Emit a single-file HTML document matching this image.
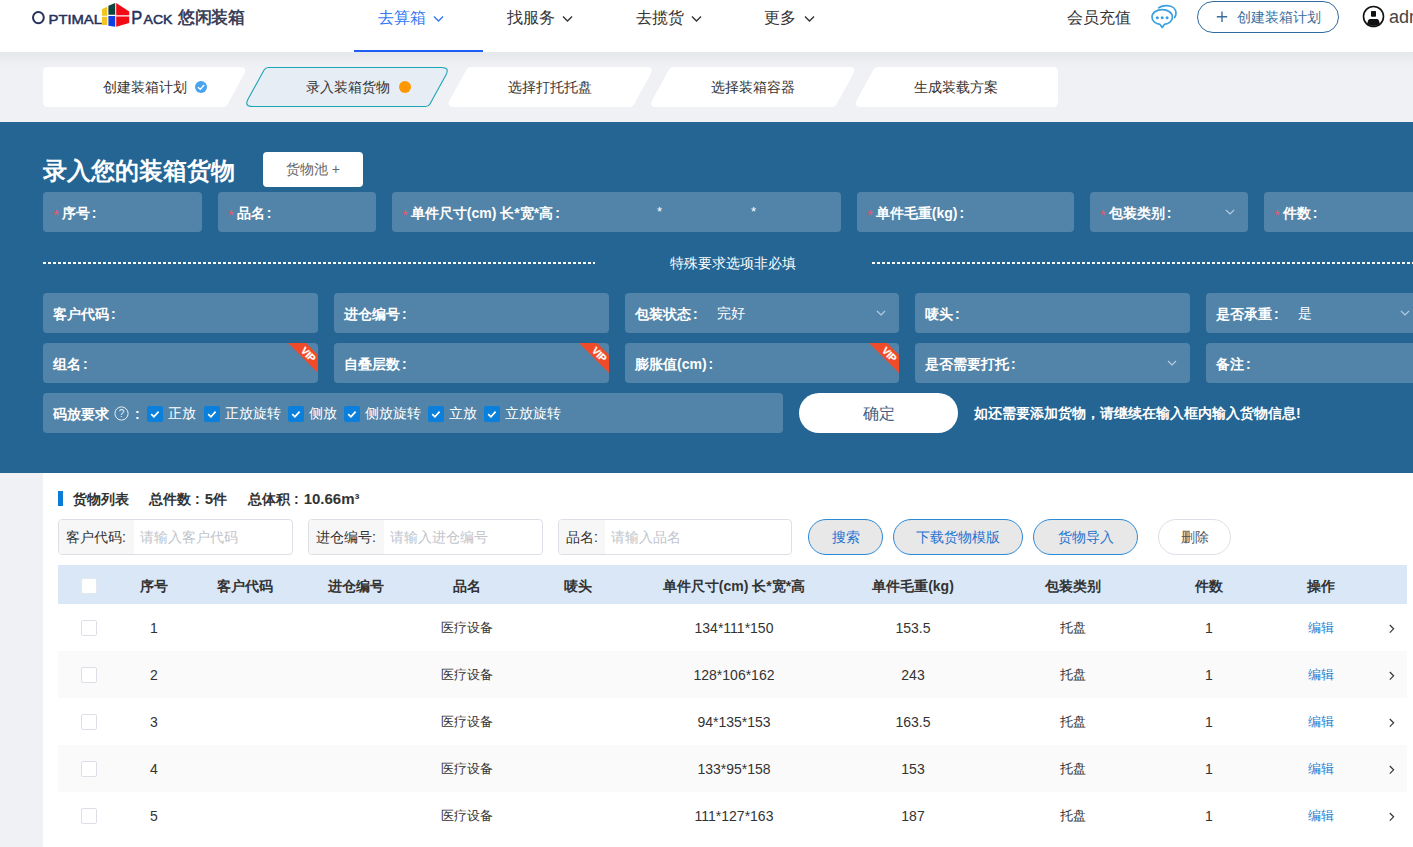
<!DOCTYPE html>
<html><head><meta charset="utf-8">
<style>
*{margin:0;padding:0;box-sizing:border-box}
html,body{width:1413px;height:847px;overflow:hidden;background:#fff;font-family:"Liberation Sans",sans-serif;color:#333}
.abs{position:absolute}
#hdr{position:absolute;left:0;top:0;width:1413px;height:52px;background:#fff}
.nav{position:absolute;top:8px;font-size:16px;line-height:20px;color:#333;white-space:nowrap}
.chev{position:absolute;top:14.5px}
#band{position:absolute;left:0;top:52px;width:1413px;height:70px;background:linear-gradient(#e6e7eb,#eceef2 10px,#eff1f5 16px,#eff1f5)}
.tabt{position:absolute;top:79px;font-size:14px;line-height:16px;color:#333;white-space:nowrap}
#panel{position:absolute;left:0;top:122px;width:1413px;height:351px;background:#256594}
.inp{position:absolute;height:40px;background:#5284a9;border-radius:4px;overflow:hidden}
.lbl{position:absolute;left:10px;top:13px;font-size:14px;line-height:16px;font-weight:bold;color:#fff;white-space:nowrap}
.req{color:#e8566a;font-weight:normal;margin-right:3px;position:relative;top:2px;font-size:15px}
.val{position:absolute;top:12px;font-size:14px;line-height:16px;color:#fff;white-space:nowrap}
.sel{position:absolute;top:17px}
.vip{position:absolute;right:0;top:0;width:30px;height:30px}
#content{position:absolute;left:43px;top:473px;width:1370px;height:374px;background:#fff}
#lm{position:absolute;left:0;top:473px;width:43px;height:374px;background:#eff1f5}
.fi{position:absolute;top:519px;height:36px;border:1px solid #dcdfe6;border-radius:4px;overflow:hidden;background:#fff}
.fil{position:absolute;left:0;top:0;height:34px;background:#f7f7f8;font-size:14px;line-height:35px;color:#333;padding-left:7px;white-space:nowrap}
.fip{position:absolute;top:0;font-size:14px;line-height:35px;color:#c0c4cc;white-space:nowrap}
.btn{position:absolute;top:519px;height:36px;border:1px solid #2b8ad8;border-radius:18px;background:#e8e8e8;font-size:14px;line-height:34px;text-align:center;color:#1f74d0;white-space:nowrap}
#thead{position:absolute;left:58px;top:565px;width:1349px;height:39px;background:#d9e7f6}
.th{position:absolute;top:578px;font-size:14px;line-height:16px;font-weight:bold;color:#333;white-space:nowrap;transform:translateX(-50%)}
.row{position:absolute;left:58px;width:1349px;height:47px}
.td{position:absolute;font-size:13px;line-height:16px;color:#333;white-space:nowrap;transform:translateX(-50%)}
.cb{position:absolute;left:81px;width:16px;height:16px;border:1px solid #dcdfe6;border-radius:2px;background:#fff}
</style></head><body>

<div id="hdr">
<svg class="abs" style="left:0;top:0" width="250" height="40" viewBox="0 0 250 40">
 <g fill="#26315c" stroke="#26315c" stroke-width="0.5" font-family="Liberation Sans">
  <ellipse cx="38.4" cy="17.6" rx="5.4" ry="5.7" fill="none" stroke-width="2"/>
  <text x="48.5" y="24" font-size="13.4" textLength="53.5" lengthAdjust="spacingAndGlyphs">PTIMAL</text>
  <text x="131.3" y="24" font-size="17.5" textLength="11" lengthAdjust="spacingAndGlyphs">P</text>
  <text x="143.5" y="24" font-size="13.4" textLength="29" lengthAdjust="spacingAndGlyphs">ACK</text>
 </g>
 <polygon points="102,9 107.2,6.8 107.2,15.8 102,15.8" fill="#f1c522"/>
 <polygon points="102,16.8 107.2,16.8 107.2,25 102,25" fill="#f1c522"/>
 <polygon points="108.4,5.7 115.2,3 115.2,14.8 108.4,14.8" fill="#0d4440"/>
 <polygon points="108.4,16 115.2,16 115.2,26.8 108.4,25.7" fill="#0e3fe0"/>
 <polygon points="116.2,3 129.2,11.5 129.2,15.2 116.2,15.2" fill="#f10b17"/>
 <polygon points="116.2,16.5 129.2,16.5 129.2,23 116.2,26.8" fill="#f10b17"/>
</svg>
<div class="abs" style="left:178px;top:6px;font-size:16.5px;line-height:22px;color:#3b4058;font-weight:bold;letter-spacing:-0.3px">悠闲装箱</div>
<div class="nav" style="left:378px;color:#3478f6">去算箱</div>
<svg class="chev" style="left:433px" width="11" height="8" viewBox="0 0 11 8"><path d="M1 1.5 L5.5 6 L10 1.5" fill="none" stroke="#3478f6" stroke-width="1.4"/></svg>
<div class="abs" style="left:354px;top:50px;width:129px;height:2px;background:#1e5ef5"></div>
<div class="nav" style="left:507px">找服务</div>
<svg class="chev" style="left:562px" width="11" height="8" viewBox="0 0 11 8"><path d="M1 1.5 L5.5 6 L10 1.5" fill="none" stroke="#333" stroke-width="1.4"/></svg>
<div class="nav" style="left:636px">去揽货</div>
<svg class="chev" style="left:691px" width="11" height="8" viewBox="0 0 11 8"><path d="M1 1.5 L5.5 6 L10 1.5" fill="none" stroke="#333" stroke-width="1.4"/></svg>
<div class="nav" style="left:764px">更多</div>
<svg class="chev" style="left:804px" width="11" height="8" viewBox="0 0 11 8"><path d="M1 1.5 L5.5 6 L10 1.5" fill="none" stroke="#333" stroke-width="1.4"/></svg>
<div class="nav" style="left:1067px">会员充值</div>
<svg class="abs" style="left:1150px;top:4px" width="28" height="26" viewBox="0 0 28 26">
 <path d="M8.8 3.8 C11 2.2 14 1.6 17 1.7 C22.5 2 26 5 26 9 C26 10.8 25.5 12.2 24.6 13.5" fill="none" stroke="#3aa0e2" stroke-width="1.7" stroke-linecap="round"/>
 <path d="M12.2 5.6 C18 5.6 22.4 8.8 22.4 13.1 C22.4 17 19 19.8 14.4 20.4 L12.2 23.4 L10 20.4 C5.4 19.8 2 17 2 13.1 C2 8.8 6.4 5.6 12.2 5.6 Z" fill="none" stroke="#3aa0e2" stroke-width="1.7" stroke-linejoin="round"/>
 <circle cx="7.3" cy="13.8" r="1.5" fill="#3aa0e2"/><circle cx="12.2" cy="13.8" r="1.5" fill="#3aa0e2"/><circle cx="17.1" cy="13.8" r="1.5" fill="#3aa0e2"/>
</svg>
<div class="abs" style="left:1197px;top:1px;width:142px;height:32px;border:1px solid #2f6aa0;border-radius:16px"></div>
<svg class="abs" style="left:1216px;top:11px" width="12" height="12" viewBox="0 0 12 12"><path d="M6 0.5 V11 M0.8 5.8 H11.2" stroke="#3a6e9e" stroke-width="1.4"/></svg>
<div class="abs" style="left:1237px;top:8px;font-size:14px;line-height:18px;color:#3a6e9e;white-space:nowrap">创建装箱计划</div>
<svg class="abs" style="left:1362px;top:5px" width="23" height="23" viewBox="0 0 23 23">
 <defs><clipPath id="uc"><circle cx="11.5" cy="11.5" r="9.5"/></clipPath></defs>
 <circle cx="11.5" cy="11.5" r="10" fill="none" stroke="#111" stroke-width="1.6"/>
 <g clip-path="url(#uc)" fill="#111"><rect x="9" y="6" width="5" height="5.8" rx="0.8"/><path d="M4 23 L6 15.8 C6.4 14.6 7.2 14 8.4 14 L14.6 14 C15.8 14 16.6 14.6 17 15.8 L19 23 Z"/></g>
</svg>
<div class="abs" style="left:1389px;top:6px;font-size:18px;line-height:22px;color:#444;white-space:nowrap">admin</div>
</div>
<div id="band">
<svg class="abs" style="left:0;top:-52px" width="1413" height="122" viewBox="0 0 1413 122">
<path d="M43.00,72.00 Q43.00,67.00 48.00,67.00 L239.54,67.00 Q248.00,67.00 243.92,74.41 L227.42,104.41 Q226.00,107.00 223.04,107.00 L48.00,107.00 Q43.00,107.00 43.00,102.00 Z" fill="#fff"/>
<path d="M264.07,70.09 Q265.50,67.50 268.45,67.50 L441.53,67.50 Q450.00,67.50 445.91,74.91 L429.93,103.91 Q428.50,106.50 425.55,106.50 L252.47,106.50 Q244.00,106.50 248.09,99.09 Z" fill="#e6edf5" stroke="#19a6b6" stroke-width="1.1"/>
<path d="M466.58,69.59 Q468.00,67.00 470.96,67.00 L646.04,67.00 Q654.50,67.00 650.42,74.41 L633.92,104.41 Q632.50,107.00 629.54,107.00 L454.46,107.00 Q446.00,107.00 450.08,99.59 Z" fill="#fff"/>
<path d="M669.08,69.59 Q670.50,67.00 673.46,67.00 L848.54,67.00 Q857.00,67.00 852.92,74.41 L836.42,104.41 Q835.00,107.00 832.04,107.00 L656.96,107.00 Q648.50,107.00 652.58,99.59 Z" fill="#fff"/>
<path d="M873.58,69.59 Q875.00,67.00 877.96,67.00 L1053.00,67.00 Q1058.00,67.00 1058.00,72.00 L1058.00,102.00 Q1058.00,107.00 1053.00,107.00 L861.46,107.00 Q853.00,107.00 857.08,99.59 Z" fill="#fff"/>

<circle cx="201" cy="87" r="6" fill="#4ba3ee"/>
<path d="M198 87.2 L200.3 89.3 L204.2 85" fill="none" stroke="#fff" stroke-width="1.3"/>
<circle cx="405" cy="87" r="6" fill="#ff9800"/>
</svg>
</div>
<div class="tabt" style="left:103px">创建装箱计划</div>
<div class="tabt" style="left:306px">录入装箱货物</div>
<div class="tabt" style="left:508px">选择打托托盘</div>
<div class="tabt" style="left:711px">选择装箱容器</div>
<div class="tabt" style="left:914px">生成装载方案</div>
<div id="panel"></div>
<div class="abs" style="left:43px;top:157px;font-size:24px;line-height:28px;font-weight:bold;color:#fff;white-space:nowrap">录入您的装箱货物</div>
<div class="abs" style="left:263px;top:152px;width:100px;height:35px;background:#fff;border-radius:4px;font-size:14px;line-height:35px;text-align:center;color:#666">货物池 +</div>
<div class="inp" style="left:43px;top:192px;width:159px"><div class="lbl"><span class="req">*</span>序号<span style="margin-left:2px">:</span></div></div>
<div class="inp" style="left:218px;top:192px;width:158px"><div class="lbl"><span class="req">*</span>品名<span style="margin-left:2px">:</span></div></div>
<div class="inp" style="left:392px;top:192px;width:449px"><div class="lbl"><span class="req">*</span>单件尺寸(cm) 长*宽*高<span style="margin-left:2px">:</span></div></div>
<div class="abs" style="left:657px;top:205px;font-size:13px;line-height:14px;color:#fff">*</div>
<div class="abs" style="left:751px;top:205px;font-size:13px;line-height:14px;color:#fff">*</div>
<div class="inp" style="left:857px;top:192px;width:217px"><div class="lbl"><span class="req">*</span>单件毛重(kg)<span style="margin-left:2px">:</span></div></div>
<div class="inp" style="left:1090px;top:192px;width:158px"><div class="lbl"><span class="req">*</span>包装类别<span style="margin-left:2px">:</span></div></div><svg class="abs" style="left:1225px;top:209px" width="10" height="6" viewBox="0 0 10 6"><path d="M1 1 L5 5 L9 1" fill="none" stroke="#b9cde0" stroke-width="1.1"/></svg>
<div class="inp" style="left:1264px;top:192px;width:160px"><div class="lbl"><span class="req">*</span>件数<span style="margin-left:2px">:</span></div></div>
<div class="abs" style="left:43px;top:262px;width:552px;height:2px;background:repeating-linear-gradient(90deg,#fff 0 3px,transparent 3px 5px)"></div>
<div class="abs" style="left:670px;top:254px;font-size:14px;line-height:18px;color:#fff;white-space:nowrap">特殊要求选项非必填</div>
<div class="abs" style="left:872px;top:262px;width:541px;height:2px;background:repeating-linear-gradient(90deg,#fff 0 3px,transparent 3px 5px)"></div>
<div class="inp" style="left:43px;top:293px;width:275px"><div class="lbl">客户代码<span style="margin-left:2px">:</span></div></div>
<div class="inp" style="left:334px;top:293px;width:275px"><div class="lbl">进仓编号<span style="margin-left:2px">:</span></div></div>
<div class="inp" style="left:625px;top:293px;width:274px"><div class="lbl">包装状态<span style="margin-left:2px">:</span></div><div class="val" style="left:92px">完好</div></div><svg class="abs" style="left:876px;top:310px" width="10" height="6" viewBox="0 0 10 6"><path d="M1 1 L5 5 L9 1" fill="none" stroke="#b9cde0" stroke-width="1.1"/></svg>
<div class="inp" style="left:915px;top:293px;width:275px"><div class="lbl">唛头<span style="margin-left:2px">:</span></div></div>
<div class="inp" style="left:1206px;top:293px;width:230px"><div class="lbl">是否承重<span style="margin-left:2px">:</span></div><div class="val" style="left:92px">是</div></div>
<svg class="abs" style="left:1400px;top:310px" width="10" height="6" viewBox="0 0 10 6"><path d="M1 1 L5 5 L9 1" fill="none" stroke="#b9cde0" stroke-width="1.1"/></svg>
<div class="inp" style="left:43px;top:343px;width:275px"><div class="lbl">组名<span style="margin-left:2px">:</span></div><svg class="vip" width="30" height="30" viewBox="0 0 30 30"><polygon points="0,0 18,0 30,12 30,30" fill="#f04b29"/><text x="0" y="0" transform="translate(19.7,12) rotate(45)" font-family="Liberation Sans" font-weight="bold" font-size="10" fill="#fff" stroke="#fff" stroke-width="0.25" text-anchor="middle" dominant-baseline="middle">VIP</text></svg></div>
<div class="inp" style="left:334px;top:343px;width:275px"><div class="lbl">自叠层数<span style="margin-left:2px">:</span></div><svg class="vip" width="30" height="30" viewBox="0 0 30 30"><polygon points="0,0 18,0 30,12 30,30" fill="#f04b29"/><text x="0" y="0" transform="translate(19.7,12) rotate(45)" font-family="Liberation Sans" font-weight="bold" font-size="10" fill="#fff" stroke="#fff" stroke-width="0.25" text-anchor="middle" dominant-baseline="middle">VIP</text></svg></div>
<div class="inp" style="left:625px;top:343px;width:274px"><div class="lbl">膨胀值(cm)<span style="margin-left:2px">:</span></div><svg class="vip" width="30" height="30" viewBox="0 0 30 30"><polygon points="0,0 18,0 30,12 30,30" fill="#f04b29"/><text x="0" y="0" transform="translate(19.7,12) rotate(45)" font-family="Liberation Sans" font-weight="bold" font-size="10" fill="#fff" stroke="#fff" stroke-width="0.25" text-anchor="middle" dominant-baseline="middle">VIP</text></svg></div>
<div class="inp" style="left:915px;top:343px;width:275px"><div class="lbl">是否需要打托<span style="margin-left:2px">:</span></div></div><svg class="abs" style="left:1167px;top:360px" width="10" height="6" viewBox="0 0 10 6"><path d="M1 1 L5 5 L9 1" fill="none" stroke="#b9cde0" stroke-width="1.1"/></svg>
<div class="inp" style="left:1206px;top:343px;width:230px"><div class="lbl">备注<span style="margin-left:2px">:</span></div></div>
<div class="inp" style="left:43px;top:393px;width:740px"><div class="lbl">码放要求</div><svg class="abs" style="left:71px;top:13px" width="15" height="15" viewBox="0 0 15 15"><circle cx="7.5" cy="7.5" r="6.6" fill="none" stroke="#e6eef5" stroke-width="1"/><text x="7.5" y="11.2" font-family="Liberation Sans" font-size="10" fill="#e6eef5" text-anchor="middle">?</text></svg><div class="lbl" style="left:92px">:</div><div class="abs" style="left:104px;top:13px;width:16px;height:16px;background:#0a80dc;border-radius:2px"><svg width="16" height="16" viewBox="0 0 16 16" style="position:absolute;left:0;top:0"><path d="M4.2 8.2 L6.9 10.8 L11.6 5.6" fill="none" stroke="#fff" stroke-width="1.8"/></svg></div><div class="val" style="left:125px">正放</div><div class="abs" style="left:161px;top:13px;width:16px;height:16px;background:#0a80dc;border-radius:2px"><svg width="16" height="16" viewBox="0 0 16 16" style="position:absolute;left:0;top:0"><path d="M4.2 8.2 L6.9 10.8 L11.6 5.6" fill="none" stroke="#fff" stroke-width="1.8"/></svg></div><div class="val" style="left:182px">正放旋转</div><div class="abs" style="left:245px;top:13px;width:16px;height:16px;background:#0a80dc;border-radius:2px"><svg width="16" height="16" viewBox="0 0 16 16" style="position:absolute;left:0;top:0"><path d="M4.2 8.2 L6.9 10.8 L11.6 5.6" fill="none" stroke="#fff" stroke-width="1.8"/></svg></div><div class="val" style="left:266px">侧放</div><div class="abs" style="left:301px;top:13px;width:16px;height:16px;background:#0a80dc;border-radius:2px"><svg width="16" height="16" viewBox="0 0 16 16" style="position:absolute;left:0;top:0"><path d="M4.2 8.2 L6.9 10.8 L11.6 5.6" fill="none" stroke="#fff" stroke-width="1.8"/></svg></div><div class="val" style="left:322px">侧放旋转</div><div class="abs" style="left:385px;top:13px;width:16px;height:16px;background:#0a80dc;border-radius:2px"><svg width="16" height="16" viewBox="0 0 16 16" style="position:absolute;left:0;top:0"><path d="M4.2 8.2 L6.9 10.8 L11.6 5.6" fill="none" stroke="#fff" stroke-width="1.8"/></svg></div><div class="val" style="left:406px">立放</div><div class="abs" style="left:441px;top:13px;width:16px;height:16px;background:#0a80dc;border-radius:2px"><svg width="16" height="16" viewBox="0 0 16 16" style="position:absolute;left:0;top:0"><path d="M4.2 8.2 L6.9 10.8 L11.6 5.6" fill="none" stroke="#fff" stroke-width="1.8"/></svg></div><div class="val" style="left:462px">立放旋转</div></div>
<div class="abs" style="left:799px;top:393px;width:159px;height:40px;background:#fff;border-radius:20px;font-size:16px;line-height:42px;text-align:center;color:#44617f">确定</div>
<div class="abs" style="left:974px;top:405px;font-size:14px;line-height:16px;font-weight:bold;color:#fff;white-space:nowrap">如还需要添加货物，请继续在输入框内输入货物信息!</div>
<div id="lm"></div>
<div id="content"></div>
<div class="abs" style="left:58px;top:491px;width:5px;height:15px;background:#0b7cd6"></div>
<div class="abs" style="left:73px;top:490px;font-size:14px;line-height:18px;font-weight:bold;color:#333;white-space:nowrap">货物列表</div>
<div class="abs" style="left:149px;top:490px;font-size:14px;line-height:18px;font-weight:bold;color:#333;white-space:nowrap">总件数<span style="margin-left:4px">:</span><span style="font-size:15px;margin-left:5px">5</span>件</div>
<div class="abs" style="left:248px;top:490px;font-size:14px;line-height:18px;font-weight:bold;color:#333;white-space:nowrap">总体积<span style="margin-left:4px">:</span><span style="font-size:15px;margin-left:5px">10.66m³</span></div>
<div class="fi" style="left:58px;width:235px"><div class="fil" style="width:75px">客户代码:</div><div class="fip" style="left:81px">请输入客户代码</div></div>
<div class="fi" style="left:308px;width:235px"><div class="fil" style="width:75px">进仓编号:</div><div class="fip" style="left:81px">请输入进仓编号</div></div>
<div class="fi" style="left:558px;width:234px"><div class="fil" style="width:46px">品名:</div><div class="fip" style="left:52px">请输入品名</div></div>
<div class="btn" style="left:808px;width:75px">搜索</div>
<div class="btn" style="left:893px;width:130px">下载货物模版</div>
<div class="btn" style="left:1033px;width:105px">货物导入</div>
<div class="btn" style="left:1158px;width:73px;border-color:#dcdfe6;background:#fff;color:#555">删除</div>
<div id="thead"></div>
<div class="abs" style="left:81px;top:578px;width:16px;height:16px;background:#fff;border-radius:2px;border:1px solid #e3e8ef"></div>
<div class="th" style="left:154px">序号</div>
<div class="th" style="left:245px">客户代码</div>
<div class="th" style="left:356px">进仓编号</div>
<div class="th" style="left:467px">品名</div>
<div class="th" style="left:578px">唛头</div>
<div class="th" style="left:734px">单件尺寸(cm) 长*宽*高</div>
<div class="th" style="left:913px">单件毛重(kg)</div>
<div class="th" style="left:1073px">包装类别</div>
<div class="th" style="left:1209px">件数</div>
<div class="th" style="left:1321px">操作</div>
<div class="row" style="top:604px;background:#fff"></div>
<div class="cb" style="top:620px"></div>
<div class="td" style="left:154px;top:620px;font-size:14px">1</div>
<div class="td" style="left:467px;top:620px">医疗设备</div>
<div class="td" style="left:734px;top:620px;font-size:14px">134*111*150</div>
<div class="td" style="left:913px;top:620px;font-size:14px">153.5</div>
<div class="td" style="left:1073px;top:620px">托盘</div>
<div class="td" style="left:1209px;top:620px;font-size:14px">1</div>
<div class="td" style="left:1321px;top:620px;color:#2a7fd0">编辑</div>
<svg class="abs" style="left:1389px;top:623px" width="7" height="11" viewBox="0 0 7 11"><path d="M0.8 2 L4.6 5.8 L0.8 9.6" fill="none" stroke="#333" stroke-width="1.2"/></svg>
<div class="row" style="top:651px;background:#fafafa"></div>
<div class="cb" style="top:667px"></div>
<div class="td" style="left:154px;top:667px;font-size:14px">2</div>
<div class="td" style="left:467px;top:667px">医疗设备</div>
<div class="td" style="left:734px;top:667px;font-size:14px">128*106*162</div>
<div class="td" style="left:913px;top:667px;font-size:14px">243</div>
<div class="td" style="left:1073px;top:667px">托盘</div>
<div class="td" style="left:1209px;top:667px;font-size:14px">1</div>
<div class="td" style="left:1321px;top:667px;color:#2a7fd0">编辑</div>
<svg class="abs" style="left:1389px;top:670px" width="7" height="11" viewBox="0 0 7 11"><path d="M0.8 2 L4.6 5.8 L0.8 9.6" fill="none" stroke="#333" stroke-width="1.2"/></svg>
<div class="row" style="top:698px;background:#fff"></div>
<div class="cb" style="top:714px"></div>
<div class="td" style="left:154px;top:714px;font-size:14px">3</div>
<div class="td" style="left:467px;top:714px">医疗设备</div>
<div class="td" style="left:734px;top:714px;font-size:14px">94*135*153</div>
<div class="td" style="left:913px;top:714px;font-size:14px">163.5</div>
<div class="td" style="left:1073px;top:714px">托盘</div>
<div class="td" style="left:1209px;top:714px;font-size:14px">1</div>
<div class="td" style="left:1321px;top:714px;color:#2a7fd0">编辑</div>
<svg class="abs" style="left:1389px;top:717px" width="7" height="11" viewBox="0 0 7 11"><path d="M0.8 2 L4.6 5.8 L0.8 9.6" fill="none" stroke="#333" stroke-width="1.2"/></svg>
<div class="row" style="top:745px;background:#fafafa"></div>
<div class="cb" style="top:761px"></div>
<div class="td" style="left:154px;top:761px;font-size:14px">4</div>
<div class="td" style="left:467px;top:761px">医疗设备</div>
<div class="td" style="left:734px;top:761px;font-size:14px">133*95*158</div>
<div class="td" style="left:913px;top:761px;font-size:14px">153</div>
<div class="td" style="left:1073px;top:761px">托盘</div>
<div class="td" style="left:1209px;top:761px;font-size:14px">1</div>
<div class="td" style="left:1321px;top:761px;color:#2a7fd0">编辑</div>
<svg class="abs" style="left:1389px;top:764px" width="7" height="11" viewBox="0 0 7 11"><path d="M0.8 2 L4.6 5.8 L0.8 9.6" fill="none" stroke="#333" stroke-width="1.2"/></svg>
<div class="row" style="top:792px;background:#fff"></div>
<div class="cb" style="top:808px"></div>
<div class="td" style="left:154px;top:808px;font-size:14px">5</div>
<div class="td" style="left:467px;top:808px">医疗设备</div>
<div class="td" style="left:734px;top:808px;font-size:14px">111*127*163</div>
<div class="td" style="left:913px;top:808px;font-size:14px">187</div>
<div class="td" style="left:1073px;top:808px">托盘</div>
<div class="td" style="left:1209px;top:808px;font-size:14px">1</div>
<div class="td" style="left:1321px;top:808px;color:#2a7fd0">编辑</div>
<svg class="abs" style="left:1389px;top:811px" width="7" height="11" viewBox="0 0 7 11"><path d="M0.8 2 L4.6 5.8 L0.8 9.6" fill="none" stroke="#333" stroke-width="1.2"/></svg>

</body></html>
